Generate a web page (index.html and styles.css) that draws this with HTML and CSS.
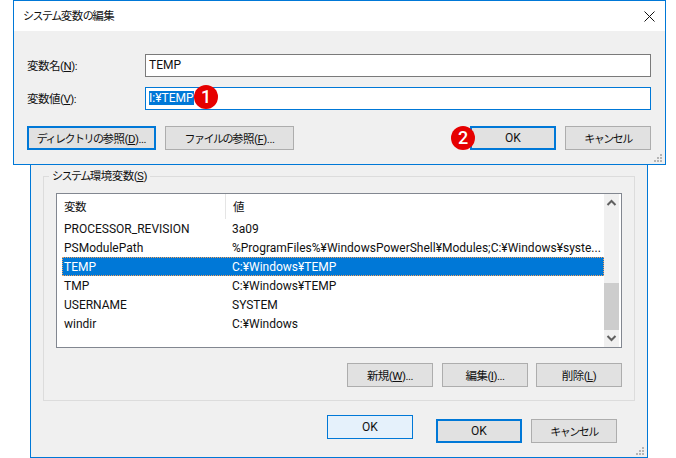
FILE: index.html
```html
<!DOCTYPE html>
<html lang="ja">

<head>
    <meta charset="UTF-8">
    <title>システム変数の編集</title>
    <link rel="stylesheet" href="styles.css">
</head>

<body>
    <!-- Environment variables window, behind the dialog -->
    <div class="window window-back">
        <fieldset class="group">
            <legend class="ja"><span class="kana">システム</span>環境変数(<u>S</u>)</legend>
            <div class="list">
                <div class="list-main">
                    <div class="list-head ja">
                        <div class="col-name">変数</div>
                        <div class="col-value">値</div>
                    </div>
                    <div class="list-row">
                        <div class="col-name">PROCESSOR_REVISION</div>
                        <div class="col-value">3a09</div>
                    </div>
                    <div class="list-row">
                        <div class="col-name">PSModulePath</div>
                        <div class="col-value">%ProgramFiles%¥WindowsPowerShell¥Modules;C:¥Windows¥syste...</div>
                    </div>
                    <div class="list-row selected">
                        <div class="col-name">TEMP</div>
                        <div class="col-value">C:¥Windows¥TEMP</div>
                    </div>
                    <div class="list-row">
                        <div class="col-name">TMP</div>
                        <div class="col-value">C:¥Windows¥TEMP</div>
                    </div>
                    <div class="list-row">
                        <div class="col-name">USERNAME</div>
                        <div class="col-value">SYSTEM</div>
                    </div>
                    <div class="list-row">
                        <div class="col-name">windir</div>
                        <div class="col-value">C:¥Windows</div>
                    </div>
                </div>
                <div class="scrollbar">
                    <svg class="arrow" width="15" height="17" viewBox="0 0 15 17">
                        <polyline points="3.5,11 7.5,7 11.5,11" />
                    </svg>
                    <div class="scroll-track">
                        <div class="scroll-thumb"></div>
                    </div>
                    <svg class="arrow" width="15" height="17" viewBox="0 0 15 17">
                        <polyline points="3.5,6 7.5,10 11.5,6" />
                    </svg>
                </div>
            </div>
            <div class="button-row group-buttons">
                <button class="btn ja">新規(<u>W</u>)...</button>
                <button class="btn ja">編集(<u>I</u>)...</button>
                <button class="btn ja">削除(<u>L</u>)</button>
            </div>
        </fieldset>
        <div class="button-row back-buttons">
            <button class="btn btn-hover">OK</button>
            <button class="btn btn-default">OK</button>
            <button class="btn ja"><span class="kana">キャンセル</span></button>
        </div>
        <svg class="grip" width="9" height="9" viewBox="0 0 9 9">
            <rect x="6" y="0" width="2" height="2" />
            <rect x="3" y="3" width="2" height="2" />
            <rect x="6" y="3" width="2" height="2" />
            <rect x="0" y="6" width="2" height="2" />
            <rect x="3" y="6" width="2" height="2" />
            <rect x="6" y="6" width="2" height="2" />
        </svg>
    </div>

    <!-- Edit dialog -->
    <div class="window window-front">
        <div class="titlebar">
            <span class="title ja"><span class="kana">システム</span>変数<span class="kana">の</span>編集</span>
            <svg class="close" width="11" height="11" viewBox="0 0 11 11">
                <path d="M0.5 0.5 L10.5 10.5 M10.5 0.5 L0.5 10.5" />
            </svg>
        </div>
        <div class="dialog-body">
            <div class="field">
                <label class="field-label ja">変数名(<u>N</u>):</label>
                <div class="input">TEMP</div>
            </div>
            <div class="field">
                <label class="field-label ja">変数値(<u>V</u>):</label>
                <div class="input input-focus"><span class="text-selected">I:¥TEMP</span></div>
            </div>
            <div class="dialog-buttons">
                <div class="button-row dialog-left">
                    <button class="btn btn-wide btn-default ja"><span class="kana">ディレクトリの</span>参照(<u>D</u>)...</button>
                    <button class="btn btn-wide ja"><span class="kana">ファイルの</span>参照(<u>F</u>)...</button>
                </div>
                <div class="button-row">
                    <button class="btn btn-default">OK</button>
                    <button class="btn ja"><span class="kana">キャンセル</span></button>
                </div>
            </div>
        </div>
        <svg class="grip" width="9" height="9" viewBox="0 0 9 9">
            <rect x="6" y="0" width="2" height="2" />
            <rect x="3" y="3" width="2" height="2" />
            <rect x="6" y="3" width="2" height="2" />
            <rect x="0" y="6" width="2" height="2" />
            <rect x="3" y="6" width="2" height="2" />
            <rect x="6" y="6" width="2" height="2" />
        </svg>
    </div>

    <!-- Numbered callouts -->
    <div class="badge badge-1">1</div>
    <div class="badge badge-2">2</div>
</body>

</html>
```

FILE: styles.css
```css
/* Base styles */
* {
    box-sizing: border-box;
}

body {
    position: relative;
    width: 676px;
    height: 458px;
    margin: 0;
    overflow: hidden;
    background-color: #fff;
    color: #111;
    font-family: Roboto, "Noto Sans CJK JP", sans-serif;
    font-size: 12px;
    line-height: 16px;
}

/* Japanese labels: the original UI font is tighter than Noto, kana most of all */
.ja {
    font-size: 11.5px;
    letter-spacing: -0.5px;
}

.kana {
    font-size: 11px;
    letter-spacing: -1.5px;
}

/* Windows */
.window {
    position: absolute;
    border: 1px solid #0078d7;
    background-color: #f0f0f0;
}

.window-back {
    left: 30px;
    top: 140px;
    width: 618px;
    height: 318px;
    padding: 27px 0 0 12px;
}

.window-front {
    left: 13px;
    top: 0;
    width: 653px;
    height: 165px;
}

.grip {
    position: absolute;
    right: 2px;
    bottom: 1px;
    fill: #b5b5b5;
}

/* Title bar */
.titlebar {
    display: flex;
    align-items: center;
    justify-content: space-between;
    height: 30px;
    padding: 0 10px 0 9px;
    background-color: #fff;
}

.close {
    stroke: #111;
    stroke-width: 1;
    fill: none;
}

/* Dialog form */
.dialog-body {
    padding: 23px 14px 0 13px;
}

.field {
    display: flex;
    align-items: center;
    height: 23px;
    margin-bottom: 10px;
}

.field-label {
    width: 118px;
}

.input {
    flex: 1;
    height: 23px;
    padding: 2px 3px;
    border: 1px solid #7a7a7a;
    background-color: #fff;
}

.input-focus {
    border-color: #0078d7;
}

.text-selected {
    background-color: #0078d7;
    color: #fff;
}

.dialog-buttons {
    display: flex;
    justify-content: space-between;
    margin-top: 16px;
}

.dialog-left {
    gap: 10px;
}

/* Buttons */
.button-row {
    display: flex;
    gap: 9px;
}

.btn {
    width: 86px;
    height: 24px;
    padding: 0;
    border: 1px solid #adadad;
    background-color: #e1e1e1;
    color: #111;
    font-family: inherit;
    font-size: 12px;
    white-space: nowrap;
}

.btn.ja {
    font-size: 11.5px;
}

.btn-wide {
    width: 129px;
}

.btn-default {
    border: 2px solid #0078d7;
}

.btn-hover {
    border-color: #0078d7;
    background-color: #e5f1fb;
}

/* Group box */
.group {
    width: 592px;
    min-width: 0;
    height: 233px;
    margin: 0;
    padding: 8px 12px 0 12px;
    border: 1px solid #dcdcdc;
}

.group legend {
    margin-left: -7px;
    padding: 0 3px;
}

.group-buttons {
    justify-content: flex-end;
    gap: 8px;
    margin-top: 15px;
}

.group-buttons .btn:first-child {
    margin-right: 1px;
}

/* Variable list */
.list {
    display: flex;
    height: 155px;
    padding-right: 2px;
    border: 1px solid #828790;
    background-color: #fff;
}

.list-main {
    flex: 1;
    min-width: 0;
    padding-left: 5px;
}

.list-head {
    display: flex;
    height: 25px;
    align-items: center;
}

.list-row {
    display: flex;
    height: 19px;
    align-items: center;
}

.list-head .col-value {
    align-self: stretch;
    display: flex;
    align-items: center;
    border-left: 1px solid #e5e5e5;
    margin-left: -7px;
    padding-left: 7px;
}

.col-name {
    width: 170px;
    padding-left: 2px;
    white-space: nowrap;
}

.col-value {
    flex: 1;
    white-space: nowrap;
}

.selected {
    outline: 1px dotted #f7a35c;
    outline-offset: -1px;
    background-color: #0078d7;
    color: #fff;
}

/* Scrollbar */
.scrollbar {
    display: flex;
    flex: none;
    flex-direction: column;
    width: 15px;
    background-color: #f0f0f0;
}

.arrow {
    flex: none;
    stroke: #606060;
    stroke-width: 2;
    fill: none;
}

.scroll-track {
    display: flex;
    flex: 1;
    flex-direction: column;
    justify-content: flex-end;
}

.scroll-thumb {
    height: 47px;
    background-color: #cdcdcd;
}

/* Bottom buttons of the back window */
.back-buttons {
    align-items: flex-start;
    padding: 14px 0 0 284px;
}

.back-buttons .btn-hover {
    margin-right: 14px;
}

.back-buttons .btn-default,
.back-buttons .btn:last-child {
    margin-top: 4px;
}

/* Callouts */
.badge {
    position: absolute;
    width: 24px;
    height: 24px;
    border-radius: 50%;
    background-color: #e60000;
    color: #fff;
    font-size: 18px;
    font-weight: 500;
    line-height: 24px;
    text-align: center;
}

.badge-1 {
    left: 194px;
    top: 85px;
}

.badge-2 {
    left: 451px;
    top: 126px;
}
```
